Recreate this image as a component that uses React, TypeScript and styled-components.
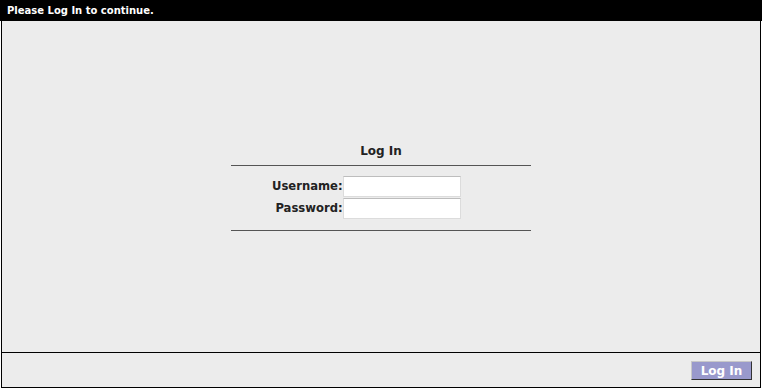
import React from "react";
import styled, { createGlobalStyle } from "styled-components";

const Global = createGlobalStyle`
  html, body { margin: 0; padding: 0; background: #ffffff; }
  body { font-family: "DejaVu Sans", Verdana, sans-serif; }
`;

const Page = styled.div`
  width: 762px;
  height: 388px;
  display: flex;
  flex-direction: column;
`;

const Header = styled.div`
  height: 21px;
  background: #000;
  color: #fff;
  font-size: 10px;
  font-weight: bold;
  display: flex;
  align-items: center;
  padding-left: 7px;
  box-sizing: border-box;
`;

const Frame = styled.div`
  flex: 1;
  margin: 0 1px;
  border: 1px solid #000;
  border-top: none;
  background: #ececec;
  display: flex;
  flex-direction: column;
`;

const Main = styled.div`
  flex: 1;
  display: flex;
  align-items: center;
  justify-content: center;
`;

const Form = styled.div`
  width: 300px;
  display: flex;
  flex-direction: column;
  align-items: center;
  color: #222;
  font-size: 12px;
  font-weight: bold;
`;

const Title = styled.div`
  height: 22px;
  line-height: 16px;
`;

const Rule = styled.div`
  align-self: stretch;
  height: 1px;
  background: #555;
`;

const Fields = styled.div`
  align-self: stretch;
  display: grid;
  grid-template-columns: auto 118px;
  justify-content: start;
  row-gap: 1px;
  padding: 10px 0 11px 41px;
  align-items: center;
`;

const Label = styled.label`
  text-align: right;
  white-space: nowrap;
  font-size: 11.6px;
`;

const Input = styled.input`
  width: 118px;
  height: 21px;
  box-sizing: border-box;
  border: 1px solid #dcdcdc;
  border-top-color: #bdbdbd;
  background: #fff;
  margin: 0;
  padding: 0 2px;
  font: 11px "DejaVu Sans", sans-serif;
`;

const Footer = styled.div`
  height: 34px;
  border-top: 1px solid #000;
  display: flex;
  align-items: center;
  justify-content: flex-end;
  padding-right: 8px;
`;

const Button = styled.button`
  width: 61px;
  height: 19px;
  margin-top: 1px;
  box-sizing: border-box;
  background: #9999cc;
  color: #fff;
  font: bold 12px "DejaVu Sans", Verdana, sans-serif;
  border: 1px solid;
  border-color: #c8c8c8 #333 #333 #c8c8c8;
  padding: 0;
  line-height: 16px;
`;

export default function App() {
  return (
    <>
      <Global />
      <Page>
        <Header>Please Log In to continue.</Header>
        <Frame>
          <Main>
            <Form>
              <Title>Log In</Title>
              <Rule />
              <Fields>
                <Label htmlFor="u">Username:</Label>
                <Input id="u" type="text" />
                <Label htmlFor="p">Password:</Label>
                <Input id="p" type="password" />
              </Fields>
              <Rule />
            </Form>
          </Main>
          <Footer>
            <Button>Log In</Button>
          </Footer>
        </Frame>
      </Page>
    </>
  );
}
